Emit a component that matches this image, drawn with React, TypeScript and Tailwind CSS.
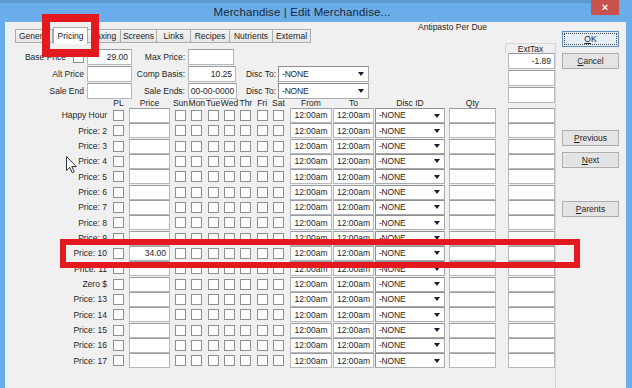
import React from "react";

const rowLabels = [
  "Happy Hour",
  "Price: 2",
  "Price: 3",
  "Price: 4",
  "Price: 5",
  "Price: 6",
  "Price: 7",
  "Price: 8",
  "Price: 9",
  "Price: 10",
  "Price: 11",
  "Zero $",
  "Price: 13",
  "Price: 14",
  "Price: 15",
  "Price: 16",
  "Price: 17",
];

const days = ["Sun", "Mon", "Tue", "Wed", "Thr", "Fri", "Sat"];

function Box({
  className = "",
  children,
  align = "right",
}: {
  className?: string;
  children?: React.ReactNode;
  align?: "right" | "center" | "left";
}) {
  const a =
    align === "right" ? "justify-end pr-[3px]" : align === "center" ? "justify-center" : "justify-start pl-[3px]";
  return (
    <div
      className={`flex items-center bg-white border border-[#b5b8bd] border-t-[#9a9ca1] ${a} ${className}`}
    >
      {children}
    </div>
  );
}

function Check({ className = "" }: { className?: string }) {
  return <div className={`w-[11px] h-[11px] shrink-0 bg-[#fdfdfd] border border-[#8e8f90] ${className}`} />;
}

function Select({ className = "" }: { className?: string }) {
  return (
    <div
      className={`flex items-center justify-between bg-white border border-[#a8aaae] border-t-[#8c8e92] border-l-[#8c8e92] pl-[3px] pr-[4px] ${className}`}
    >
      <span className="tracking-[-0.2px]">-NONE</span>
      <svg width="6" height="4" viewBox="0 0 6 4">
        <path d="M0 0 L6 0 L3 4 Z" fill="#1b1b3a" />
      </svg>
    </div>
  );
}

function Btn({ children, primary = false, className = "" }: { children: React.ReactNode; primary?: boolean; className?: string }) {
  return (
    <div
      className={`w-[57px] h-[16px] flex items-center justify-center border ${
        primary ? "bg-[#e3eef9] border-[#5a8fc4]" : "bg-[#e4e4e4] border-[#adadad]"
      } ${className}`}
    >
      {primary ? (
        <div className="w-[53px] h-[12px] border border-dotted border-[#4a4a4a] flex items-center justify-center">
          {children}
        </div>
      ) : (
        children
      )}
    </div>
  );
}

function Tab({ label, selected = false, w }: { label: string; selected?: boolean; w: string }) {
  if (selected) {
    return (
      <div
        className={`${w} h-[17px] -mb-[1px] relative z-10 bg-[#fdfdfd] border border-b-0 border-[#acacac] flex items-start justify-center pt-[4px] shrink-0`}
      >
        {label}
      </div>
    );
  }
  return (
    <div
      className={`${w} h-[14px] bg-gradient-to-b from-[#f3f3f3] to-[#e6e6e6] border border-[#acacac] -ml-[1px] first:ml-0 flex items-center justify-center shrink-0 overflow-hidden whitespace-nowrap`}
    >
      {label}
    </div>
  );
}

export default function App() {
  return (
    <div className="w-[632px] h-[388px] overflow-hidden relative bg-[#6badea] flex flex-col font-['Liberation_Sans',Arial,sans-serif] text-[8.5px] leading-none text-[#1e1e1e]">
      {/* title bar */}
      <div className="h-[22px] shrink-0 flex relative">
        <div className="flex-1 flex flex-col">
          <div className="h-[3px] bg-[#5d9ad2]" />
          <div className="flex-1 pl-[13px] flex justify-center items-start pt-[4px]">
            <span className="text-[11.5px] text-[#18293b] tracking-[0.1px]">Merchandise | Edit Merchandise...</span>
          </div>
        </div>
        <div className="w-[41px] shrink-0 flex items-start">
          <div className="w-[28px] h-[15px] bg-[#c9524c] flex items-center justify-center text-white text-[11px] font-bold">
            ×
          </div>
        </div>
      </div>

      {/* body */}
      <div className="flex-1 ml-[5px] mr-[6px] bg-[#f0f0f0] flex">
        {/* left part */}
        <div className="w-[551px] shrink-0 flex flex-col">
          {/* tab header */}
          <div className="h-[21px] shrink-0 flex items-end pl-[10px]">
            <div className="flex items-end">
              <Tab label="General" w="w-[38px]" />
              <Tab label="Pricing" selected w="w-[35px]" />
              <Tab label="Taxing" w="w-[34px]" />
              <Tab label="Screens" w="w-[37px]" />
              <Tab label="Links" w="w-[35px]" />
              <Tab label="Recipes" w="w-[40px]" />
              <Tab label="Nutrients" w="w-[44px]" />
              <Tab label="External" w="w-[39px]" />
            </div>
            <div className="self-start ml-[107px] h-[10px] leading-[10px] whitespace-nowrap">Antipasto Per Due</div>
          </div>

          {/* panel */}
          <div className="flex-1 flex items-stretch">
            {/* left block */}
            <div className="w-[491px] shrink-0 pl-[7px] pt-[6px] flex flex-col">
              {/* top form */}
              <div className="flex flex-col gap-[1px]">
                <div className="h-[16px] flex items-stretch">
                  <div className="w-[72px] flex items-center justify-end">
                    <span>Base Price</span>
                    <Check className="ml-[7px] w-[10px] h-[10px]" />
                  </div>
                  <Box className="ml-[3px] w-[45px]">29.00</Box>
                  <div className="w-[53px] flex items-center justify-end">Max Price:</div>
                  <Box className="ml-[3px] w-[46px]" />
                </div>
                <div className="h-[16px] flex items-stretch">
                  <div className="w-[72px] flex items-center justify-end">Alt Price</div>
                  <Box className="ml-[3px] w-[45px]" />
                  <div className="w-[53px] flex items-center justify-end">Comp Basis:</div>
                  <Box className="ml-[3px] w-[48px]">10.25</Box>
                  <div className="w-[40px] flex items-center justify-end">Disc To:</div>
                  <Select className="ml-[2px] w-[91px]" />
                </div>
                <div className="h-[16px] flex items-stretch">
                  <div className="w-[72px] flex items-center justify-end">Sale End</div>
                  <Box className="ml-[3px] w-[45px]" />
                  <div className="w-[53px] flex items-center justify-end">Sale Ends:</div>
                  <Box className="ml-[3px] w-[49px]" align="center">00-00-0000</Box>
                  <div className="w-[39px] flex items-center justify-end">Disc To:</div>
                  <Select className="ml-[2px] w-[91px]" />
                </div>
              </div>

              {/* table header */}
              <div className="h-[9px] flex items-center whitespace-nowrap">
                <div className="w-[96px] shrink-0" />
                <div className="ml-[5px] w-[11px] flex justify-center">PL</div>
                <div className="ml-[5px] w-[41px] flex justify-center">Price</div>
                <div className="ml-[5px] flex gap-[5.33px]">
                  {days.map((d) => (
                    <div key={d} className="w-[11px] flex justify-center">
                      {d}
                    </div>
                  ))}
                </div>
                <div className="ml-[6px] w-[42px] flex justify-center">From</div>
                <div className="ml-[1px] w-[41px] flex justify-center">To</div>
                <div className="ml-[1px] w-[70px] flex justify-center">Disc ID</div>
                <div className="ml-[4px] w-[47px] flex justify-center">Qty</div>
              </div>

              {/* rows */}
              <div className="flex flex-col">
                {rowLabels.map((label) => (
                  <div key={label} className="h-[15.33px] flex items-start">
                    <div className="w-[96px] h-[15px] shrink-0 flex items-center justify-end pr-[1px] whitespace-nowrap">
                      {label}
                    </div>
                    <div className="ml-[5px] h-[15px] flex items-center">
                      <Check />
                    </div>
                    <Box className="ml-[5px] w-[41px] h-[15px]">{label === "Price: 10" ? "34.00" : null}</Box>
                    <div className="ml-[5px] h-[15px] flex items-center gap-[5.33px]">
                      {days.map((d) => (
                        <Check key={d} />
                      ))}
                    </div>
                    <Box className="ml-[6px] w-[42px] h-[15px]" align="center">
                      12:00am
                    </Box>
                    <Box className="ml-[1px] w-[41px] h-[15px]" align="center">
                      12:00am
                    </Box>
                    <Select className="ml-[1px] w-[70px] h-[15px]" />
                    <Box className="ml-[4px] w-[47px] h-[15px]" />
                  </div>
                ))}
              </div>
            </div>

            {/* ExtTax column */}
            <div className="ml-[10px] w-[50px] flex flex-col items-end border-r border-[#d6d6d6]">
              <div className="w-[50px] h-[10px] leading-[10px] border-t border-l border-[#d6d6d6] rounded-tl-[3px] flex justify-center">
                ExtTax
              </div>
              <div className="flex flex-col gap-[1px] w-[47px]">
                <Box className="h-[16px]">-1.89</Box>
                <Box className="h-[16px]" />
                <Box className="h-[16px]" />
              </div>
              <div className="mt-[5px] flex flex-col w-[47px]">
                {rowLabels.map((l) => (
                  <div key={l} className="h-[15.33px]">
                    <Box className="h-[15px]" />
                  </div>
                ))}
              </div>
            </div>
          </div>
        </div>

        {/* right buttons */}
        <div className="w-[70px] shrink-0 flex flex-col pl-[6px] pt-[9px]">
          <Btn primary>
            <span className="underline">O</span>K
          </Btn>
          <Btn className="mt-[6px]">
            <span className="underline">C</span>ancel
          </Btn>
          <Btn className="mt-[61px]">
            <span className="underline">P</span>revious
          </Btn>
          <Btn className="mt-[6px]">
            <span className="underline">N</span>ext
          </Btn>
          <Btn className="mt-[33px]">
            <span className="underline">P</span>arents
          </Btn>
        </div>
      </div>

      {/* red highlight overlays */}
      <div className="absolute left-[42px] top-[14px] w-[57px] h-[43px] border-[8px] border-[#e3191f] pointer-events-none" />
      <div className="absolute left-[60px] top-[239px] w-[520px] h-[29px] border-[6px] border-[#e3191f] pointer-events-none" />

      {/* mouse cursor */}
      <svg className="absolute left-[66px] top-[156px]" width="11" height="18" viewBox="0 0 11 18">
        <path
          d="M0.5 0.5 L0.5 14.5 L3.8 11.3 L6.2 16.8 L8.2 15.9 L5.9 10.6 L10.3 10.6 Z"
          fill="#ffffff"
          stroke="#333333"
          strokeWidth="1"
          strokeLinejoin="round"
        />
      </svg>
    </div>
  );
}
